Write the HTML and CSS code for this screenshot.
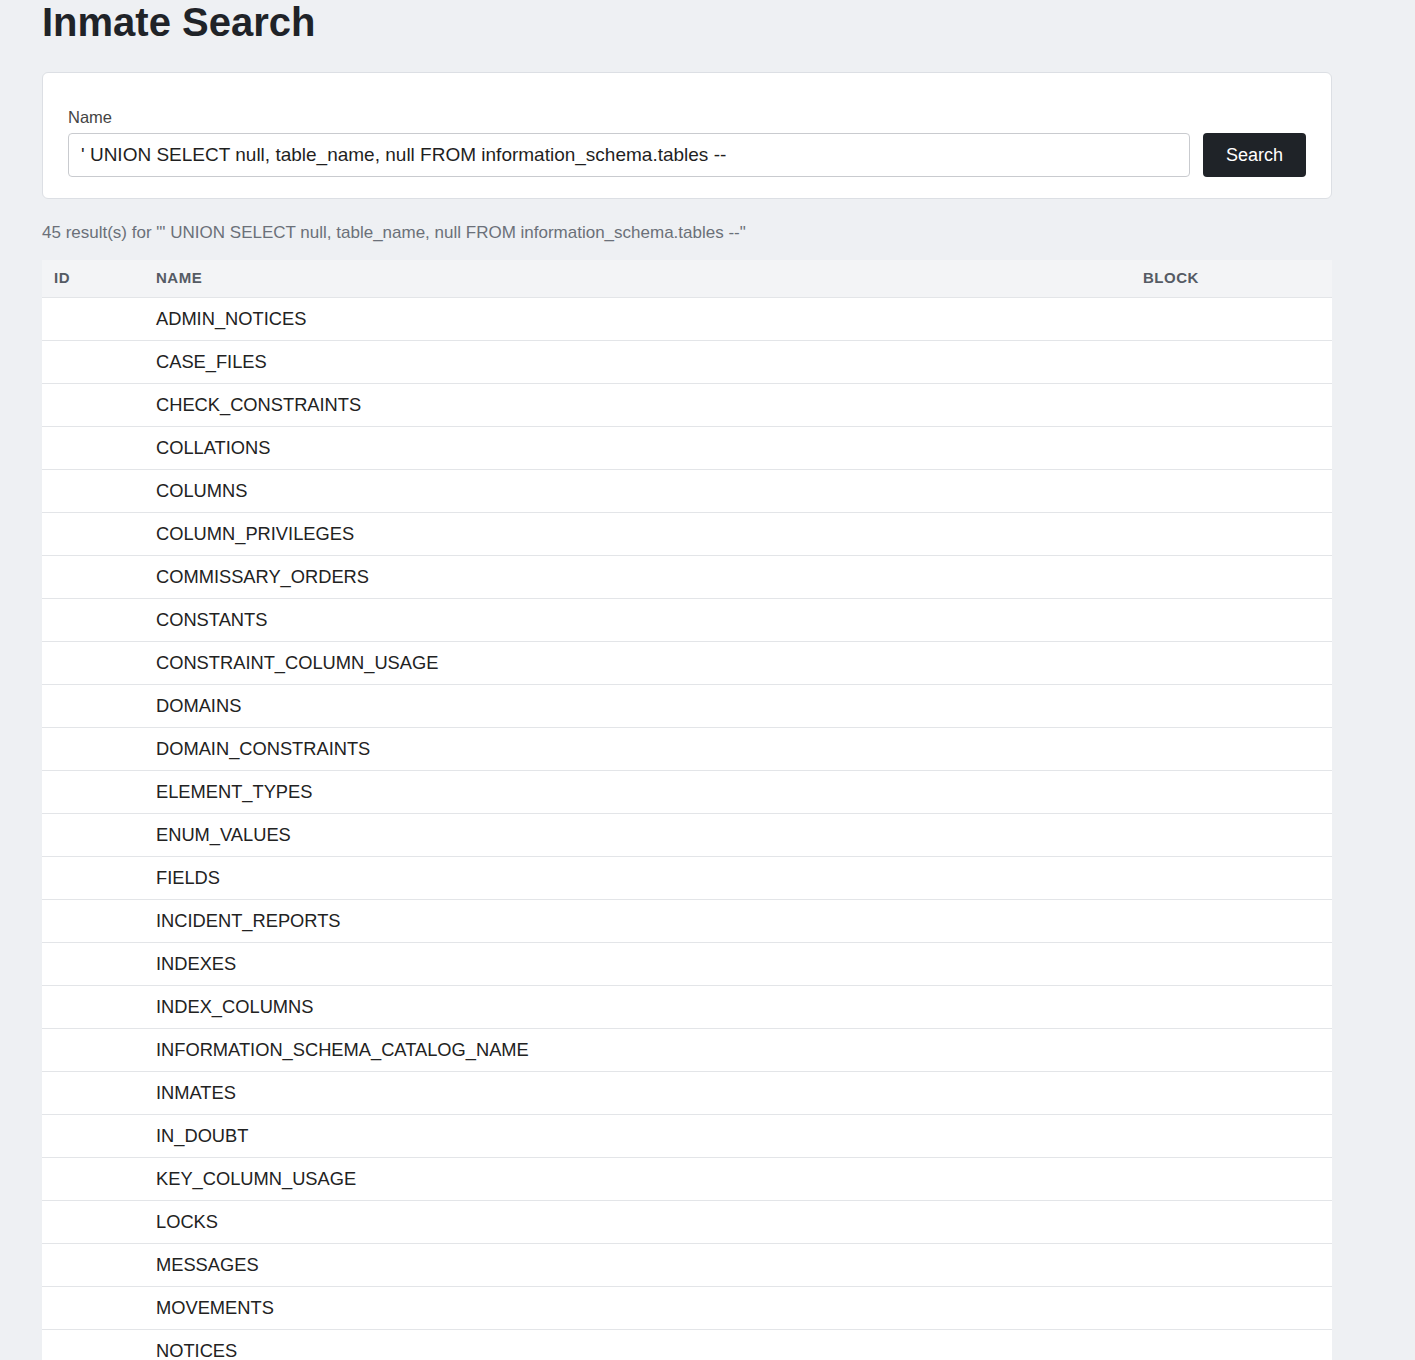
FILE: index.html
```html
<!DOCTYPE html>
<html lang="en">
<head>
  <meta charset="UTF-8">
  <meta name="viewport" content="width=device-width, initial-scale=1.0">
  <title>Inmate Search</title>
  <link rel="stylesheet" href="styles.css">
</head>
<body>
  <div class="page">
    <h1>Inmate Search</h1>

    <form class="search-card" onsubmit="return false">
      <label class="field-label" for="name">Name</label>
      <div class="search-row">
        <input class="search-input" id="name" type="text" value="' UNION SELECT null, table_name, null FROM information_schema.tables --">
        <button class="search-btn" type="submit">Search</button>
      </div>
    </form>

    <p class="result-count">45 result(s) for "' UNION SELECT null, table_name, null FROM information_schema.tables --"</p>

    <table class="results">
      <colgroup>
        <col class="col-id">
        <col class="col-name">
        <col class="col-block">
      </colgroup>
      <thead>
        <tr><th>ID</th><th>Name</th><th>Block</th></tr>
      </thead>
      <tbody>
        <tr><td></td><td>ADMIN_NOTICES</td><td></td></tr>
        <tr><td></td><td>CASE_FILES</td><td></td></tr>
        <tr><td></td><td>CHECK_CONSTRAINTS</td><td></td></tr>
        <tr><td></td><td>COLLATIONS</td><td></td></tr>
        <tr><td></td><td>COLUMNS</td><td></td></tr>
        <tr><td></td><td>COLUMN_PRIVILEGES</td><td></td></tr>
        <tr><td></td><td>COMMISSARY_ORDERS</td><td></td></tr>
        <tr><td></td><td>CONSTANTS</td><td></td></tr>
        <tr><td></td><td>CONSTRAINT_COLUMN_USAGE</td><td></td></tr>
        <tr><td></td><td>DOMAINS</td><td></td></tr>
        <tr><td></td><td>DOMAIN_CONSTRAINTS</td><td></td></tr>
        <tr><td></td><td>ELEMENT_TYPES</td><td></td></tr>
        <tr><td></td><td>ENUM_VALUES</td><td></td></tr>
        <tr><td></td><td>FIELDS</td><td></td></tr>
        <tr><td></td><td>INCIDENT_REPORTS</td><td></td></tr>
        <tr><td></td><td>INDEXES</td><td></td></tr>
        <tr><td></td><td>INDEX_COLUMNS</td><td></td></tr>
        <tr><td></td><td>INFORMATION_SCHEMA_CATALOG_NAME</td><td></td></tr>
        <tr><td></td><td>INMATES</td><td></td></tr>
        <tr><td></td><td>IN_DOUBT</td><td></td></tr>
        <tr><td></td><td>KEY_COLUMN_USAGE</td><td></td></tr>
        <tr><td></td><td>LOCKS</td><td></td></tr>
        <tr><td></td><td>MESSAGES</td><td></td></tr>
        <tr><td></td><td>MOVEMENTS</td><td></td></tr>
        <tr><td></td><td>NOTICES</td><td></td></tr>
        <tr><td></td><td>PARAMETERS</td><td></td></tr>
        <tr><td></td><td>QUERY_STATISTICS</td><td></td></tr>
        <tr><td></td><td>REFERENTIAL_CONSTRAINTS</td><td></td></tr>
        <tr><td></td><td>RIGHTS</td><td></td></tr>
        <tr><td></td><td>ROLES</td><td></td></tr>
        <tr><td></td><td>ROUTINES</td><td></td></tr>
        <tr><td></td><td>SCHEMATA</td><td></td></tr>
        <tr><td></td><td>SEQUENCES</td><td></td></tr>
        <tr><td></td><td>SESSIONS</td><td></td></tr>
        <tr><td></td><td>SESSION_STATE</td><td></td></tr>
        <tr><td></td><td>SETTINGS</td><td></td></tr>
        <tr><td></td><td>STAFF</td><td></td></tr>
        <tr><td></td><td>SYNONYMS</td><td></td></tr>
        <tr><td></td><td>TABLES</td><td></td></tr>
        <tr><td></td><td>TABLE_CONSTRAINTS</td><td></td></tr>
        <tr><td></td><td>TABLE_PRIVILEGES</td><td></td></tr>
        <tr><td></td><td>TRIGGERS</td><td></td></tr>
        <tr><td></td><td>USERS</td><td></td></tr>
        <tr><td></td><td>VIEWS</td><td></td></tr>
        <tr><td></td><td>VISITS</td><td></td></tr>
      </tbody>
    </table>
  </div>
</body>
</html>
```

FILE: styles.css
```css
body {
  margin: 0;
  padding: 0 42px 40px;
  background-color: #eef0f3;
  font-family: "Liberation Sans", Arial, sans-serif;
  color: #222;
}

.page {
  max-width: 1290px;
}

/* title */
h1 {
  margin: 0;
  font-size: 40px;
  line-height: 44px;
  font-weight: 700;
  color: #1f2328;
}

/* search form */
.search-card {
  margin-top: 28px;
  background-color: #fff;
  border: 1px solid #dcdfe4;
  border-radius: 6px;
  padding: 34px 25px 21px;
}

.field-label {
  display: block;
  margin-bottom: 6px;
  font-size: 16.5px;
  line-height: 20px;
  color: #444;
}

.search-row {
  display: flex;
  gap: 13px;
}

.search-input {
  flex: 1;
  box-sizing: border-box;
  height: 44px;
  padding: 0 12px;
  border: 1px solid #c9cbcf;
  border-radius: 4px;
  font-family: inherit;
  font-size: 19px;
  color: #1f1f1f;
  background-color: #fff;
}

.search-btn {
  box-sizing: border-box;
  height: 44px;
  padding: 0 23px;
  border: none;
  border-radius: 4px;
  background-color: #1f2328;
  color: #fff;
  font-family: inherit;
  font-size: 18px;
  cursor: pointer;
}

/* result summary */
.result-count {
  margin: 24px 0 17px;
  font-size: 17px;
  line-height: 20px;
  color: #6b7079;
}

/* results table */
.results {
  width: 100%;
  border-collapse: collapse;
  table-layout: fixed;
  background-color: #fff;
}

.col-id { width: 102px; }
.col-block { width: 201px; }

.results th {
  padding: 10px 12px 11px;
  background-color: #f3f4f6;
  border-bottom: 1px solid #e3e5e8;
  text-align: left;
  text-transform: uppercase;
  font-size: 15px;
  line-height: 16px;
  letter-spacing: 0.5px;
  color: #555b64;
}

.results td {
  padding: 11px 12px;
  border-bottom: 1px solid #e3e5e8;
  font-size: 18.3px;
  line-height: 20px;
  color: #222;
}
```
